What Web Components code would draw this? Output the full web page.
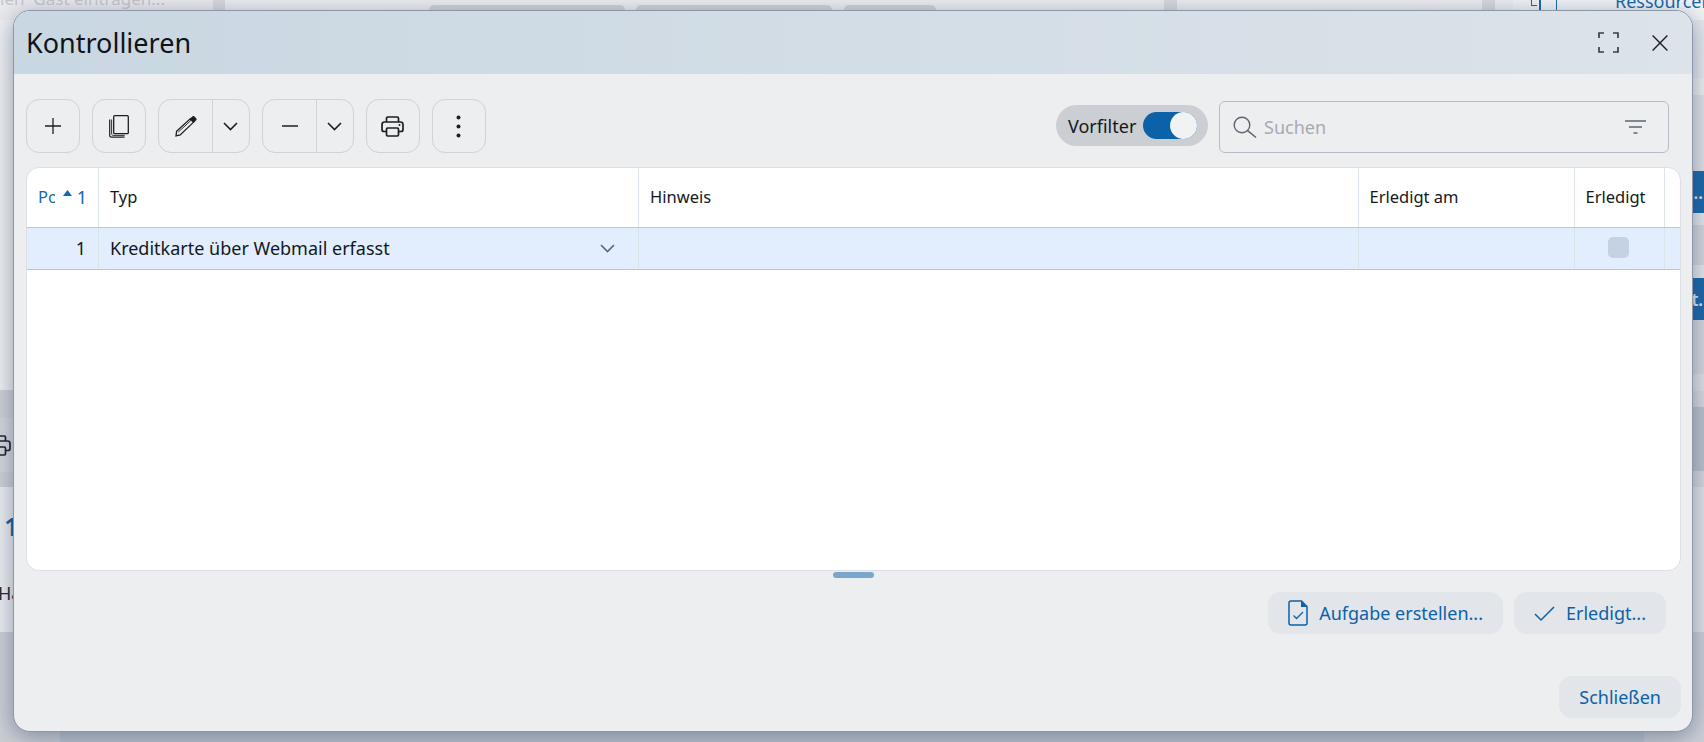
<!DOCTYPE html>
<html lang="de">
<head>
<meta charset="utf-8">
<title>Kontrollieren</title>
<style>
  html, body { margin: 0; height: 100%; overflow: hidden; background: #e9eaec; }
  body { font-family: "Noto Sans", "Liberation Sans", sans-serif; position: relative; }
</style>
</head>
<body>
<kc-backdrop></kc-backdrop>
<kc-dialog heading="Kontrollieren">
  <kc-toolbar slot="toolbar">
    <kc-tool-button icon="plus"></kc-tool-button>
    <kc-tool-button icon="copy"></kc-tool-button>
    <kc-split-button icon="pencil"></kc-split-button>
    <kc-split-button icon="minus"></kc-split-button>
    <kc-tool-button icon="printer"></kc-tool-button>
    <kc-tool-button icon="dots"></kc-tool-button>
    <kc-toggle slot="end" checked>Vorfilter</kc-toggle>
    <kc-search slot="end" placeholder="Suchen"></kc-search>
  </kc-toolbar>
  <kc-grid slot="content"></kc-grid>
  <kc-action-button slot="actions" icon="task">Aufgabe erstellen...</kc-action-button>
  <kc-action-button slot="actions" icon="check">Erledigt...</kc-action-button>
  <kc-action-button slot="footer">Schließen</kc-action-button>
</kc-dialog>

<script>
(function() {
  'use strict';

  // all icons share one helper, viewBox is given in real pixels per icon
  const ICONS = {
    plus: [16, 16, '<path d="M8 0v16M0 8h16" stroke-width="1.3"/>'],
    copy: [20, 23, '<rect x="4.7" y=".7" width="14.6" height="18" rx="1" stroke-width="1.3"/><path d="M.7 4.500v15.800c0 1 .9 1.900 1.900 1.900h13" stroke-width="1.200"/><path d="M2.600 4.500v14.200c0 1 .6 1.700 1.600 1.700h11.500" stroke-width=".9"/>'],
    pencil: [22, 21, '<path d="M1.600 15.200 15.200 2.800l3.400 3.300L5.200 19 1 20Z" stroke-width="1.300"/><path d="M14.400 3 17.400.4c.6-.5 1.500-.5 2 .1l1.800 1.800c.5.600.5 1.400 0 1.900L18.600 7Z" fill="#1b1f24" stroke="none"/><path d="M3.200 16.200 16.400 4" stroke-width=".9"/>'],
    minus: [16, 2, '<path d="M0 1h16" stroke-width="1.3"/>'],
    chevron: [15, 9, '<path d="M1 1l6.500 6.500L14 1" stroke-width="1.600"/>'],
    printer: [23, 21, '<path d="M5.500 6V2.200C5.500 1.500 6 1 6.700 1h9.600c.7 0 1.200.5 1.200 1.200V6" stroke-width="1.700"/><path d="M5 15.500H3C1.900 15.500 1 14.600 1 13.500V8.500C1 7.100 2.100 6 3.500 6h16C20.900 6 22 7.100 22 8.500v5c0 1.100-.9 2-2 2h-2" stroke-width="1.700"/><rect x="5.500" y="12" width="12" height="8" rx="1.200" stroke-width="1.700"/><circle cx="18.500" cy="9" r="1" fill="#1b1f24" stroke="none"/>'],
    dots: [5, 23, '<circle cx="2.500" cy="2.500" r="2" fill="#1b1f24" stroke="none"/><circle cx="2.500" cy="11.500" r="2" fill="#1b1f24" stroke="none"/><circle cx="2.500" cy="20.500" r="2" fill="#1b1f24" stroke="none"/>'],
    expand: [21, 21, '<path d="M1 6V1h5M15 1h5v5M20 15v5h-5M6 20H1v-5" stroke-width="1.700" stroke="#3a3f45"/>'],
    close: [16, 16, '<path d="M.6.600l14.800 14.800M15.400.6.600 15.400" stroke-width="1.400"/>'],
    search: [24, 22, '<circle cx="9" cy="9" r="7.800" stroke="#5b6672" stroke-width="1.400"/><path d="M14.600 14.600 23 21.500" stroke="#5b6672" stroke-width="1.500"/>'],
    filter: [21, 14, '<path d="M0 1h21M4 7h13" stroke="#5b6672" stroke-width="1.500"/><path d="M8.500 13h4" stroke="#5b6672" stroke-width="1.700"/>'],
    task: [20, 26, '<path d="M3 1h10.500L19 6.500V23c0 1.100-.9 2-2 2H3c-1.100 0-2-.9-2-2V3c0-1.100.9-2 2-2Z" stroke="#0b62a8" stroke-width="1.500"/><path d="M13 1v6h6Z" fill="#0b62a8" stroke="none"/><path d="M5.500 15.500l3 3 6.500-6.500" stroke="#0b62a8" stroke-width="1.300"/>'],
    check: [21, 15, '<path d="M1 8l6 6L20 1" stroke="#0b62a8" stroke-width="1.500"/>'],
    print: [23, 21, '<path d="M5.500 6V2.200C5.500 1.500 6 1 6.700 1h9.600c.7 0 1.200.5 1.200 1.200V6M5 15.500H3C1.900 15.500 1 14.600 1 13.500V8.500C1 7.100 2.100 6 3.500 6h16C20.900 6 22 7.100 22 8.500v5c0 1.100-.9 2-2 2h-2" stroke-width="1.700"/><rect x="5.500" y="12" width="12" height="8" rx="1.200" stroke-width="1.700"/>']
  };

  function iconSvg(name) {
    const ic = ICONS[name];
    if (!ic) return '';
    return `<svg width="${ic[0]}" height="${ic[1]}" viewBox="0 0 ${ic[0]} ${ic[1]}" fill="none" stroke="#1b1f24" style="display:block;overflow:visible;flex:none">${ic[2]}</svg>`;
  }

  // small base class, saves the same three lines in every element
  class KcElement extends HTMLElement {
    render(html) {
      if (!this.shadowRoot) this.attachShadow({ mode: 'open' });
      this.shadowRoot.innerHTML = html;
    }
  }

  class KcBackdrop extends KcElement {
    connectedCallback() {
      const band = (h, bg, inner) => `<div class="band" style="height:${h}px;background:${bg}">${inner || ''}</div>`;
      this.render(`
        <style>
          :host { display: flex; flex-direction: column; width: 1704px; height: 742px; overflow: hidden; color: #22272c; }
          .top { display: flex; height: 20px; flex: none; background: #eeeeef; }
          .top > div { flex: none; height: 100%; }
          .faded { width: 213px; background: #ebebed; color: #c6c7ca; font-size: 17px; line-height: 22px; white-space: pre; overflow: hidden; }
          .faded span { display: block; margin-top: -12px; }
          .sep { background: #d8d9dc; }
          .pill { height: 12px !important; margin-top: 5px; background: #d2d4d6; border-radius: 5px 5px 0 0; }
          .res { flex: 1 !important; display: flex; background: #f2f4f6; color: #1567ab; font-size: 18px; line-height: 24px; overflow: hidden; }
          .res span { display: block; flex: none; margin: -11px 0 0 58px; }
          .res i { display: block; flex: none; width: 6px; height: 6px; margin-left: 18px; border-left: 1.500px solid #1567ab; border-bottom: 1.500px solid #1567ab; box-sizing: border-box; }
          .res b { display: block; flex: none; width: 1.500px; height: 12px; margin-left: 2px; background: #1567ab; }
          .res b + b { margin-left: 15px; }
          .rows { flex: 1; display: flex; justify-content: space-between; background: #bfc5cd; }
          .col { width: 60px; display: flex; flex-direction: column; }
          .band { flex: none; overflow: hidden; display: flex; align-items: center; white-space: nowrap; box-sizing: border-box; }
          .blue { justify-content: flex-end; color: #dfe9f3; font-size: 17px; font-weight: 600; }
          .one { color: #0d5fa3; font-size: 26px; line-height: 33px; font-weight: 600; padding: 23px 0 0 4px; }
          .ha { font-size: 18px; line-height: 24px; margin: 38px 0 0 -2px; }
          .stack { align-self: flex-start; }
          .ic { margin-left: -12px; }
        </style>
        <div class="top">
          <div class="faded"><span>ien  Gast eintragen...</span></div>
          <div class="sep" style="width:12px"></div>
          <div style="width:204px"></div>
          <div class="pill" style="width:196px"></div>
          <div style="width:11px"></div>
          <div class="pill" style="width:196px"></div>
          <div style="width:12px"></div>
          <div class="pill" style="width:92px"></div>
          <div style="width:228px"></div>
          <div class="sep" style="width:13px"></div>
          <div style="width:305px"></div>
          <div class="sep" style="width:13px"></div>
          <div style="width:18px"></div>
          <div class="res"><i></i><b></b><b></b><span>Ressourcen</span></div>
        </div>
        <div class="rows">
          <div class="col">
            ${band(370, '#eff0f2')}
            ${band(28, '#cfd2d6')}
            ${band(54, '#d5d8dc', '<div class="ic">' + iconSvg('print') + '</div>')}
            ${band(15, '#cfd2d6')}
            ${band(145, '#eceef0', '<div class="stack"><div class="one">1</div><div class="ha">Ha</div></div>')}
            ${band(110, '#cdd0d5')}
          </div>
          <div class="col">
            ${band(18, '#e7eaed')}
            ${band(40, '#e7eaed')}
            ${band(17, '#eef0f1')}
            ${band(76, '#e0e3e6')}
            ${band(42, '#1a66a8', '<span class="blue" style="display:flex;width:100%;padding-right:1px">...</span>')}
            ${band(12, '#e6e8ea')}
            ${band(40, '#d5d8dc')}
            ${band(13, '#e6e8ea')}
            ${band(42, '#1a66a8', '<span class="blue" style="display:flex;width:100%;padding-right:1px">t.</span>')}
            ${band(54, '#d5d8dc')}
            ${band(17, '#e0e2e5')}
            ${band(16, '#d8dade')}
            ${band(64, '#bcc2cb')}
            ${band(16, '#d6d8dc')}
            ${band(145, '#e2e4e7')}
            ${band(110, '#ccd0d6')}
          </div>
        </div>`);
    }
  }

  class KcDialog extends KcElement {
    connectedCallback() {
      this.render(`
        <style>
          :host {
            position: absolute; left: 13px; top: 10px; width: 1680px; height: 722px;
            display: flex; flex-direction: column; box-sizing: border-box;
            background: #edeef0; border: 1px solid #8c98a9; border-radius: 17px; overflow: hidden;
            color: #14181c; box-shadow: 0 5px 24px rgba(50, 70, 105, .5);
          }
          header {
            flex: none; height: 63px; display: flex; align-items: center; padding: 0 24px 0 12px;
            background: linear-gradient(90deg, #c9d7e2, #dce3e9);
          }
          h1 { margin: 0; flex: 1; font-size: 27px; font-weight: 400; line-height: 34px; color: #0f1418; }
          .hbtn { display: flex; align-items: center; gap: 33px; }
          main { flex: 1; min-height: 0; display: flex; flex-direction: column; padding: 25px 11px 13px 12px; }
          .content { flex: 1; min-height: 0; display: flex; margin-top: 14px; }
          .handle { flex: none; display: flex; justify-content: center; padding: 1px 0 14px; }
          .handle i { display: block; width: 41px; height: 6px; border-radius: 3px; background: #7ba6cc; }
          .actions { flex: none; display: flex; justify-content: flex-end; gap: 11px; padding-right: 15px; }
          .footer { flex: none; display: flex; justify-content: flex-end; margin-top: 42px; }
        </style>
        <header>
          <h1>${this.getAttribute('heading') || ''}</h1>
          <div class="hbtn">${iconSvg('expand')}${iconSvg('close')}</div>
        </header>
        <main>
          <slot name="toolbar"></slot>
          <div class="content"><slot name="content"></slot></div>
          <div class="handle"><i></i></div>
          <div class="actions"><slot name="actions"></slot></div>
          <div class="footer"><slot name="footer"></slot></div>
        </main>`);
    }
  }

  class KcToolbar extends KcElement {
    connectedCallback() {
      this.render(`
        <style>
          :host { display: flex; flex: none; align-items: center; height: 54px; padding-right: 12px; }
          .start { display: flex; gap: 12.500px; }
          .end { margin-left: auto; display: flex; align-items: center; gap: 11px; }
          ::slotted(kc-toggle) { margin-top: -1px; }
        </style>
        <div class="start"><slot></slot></div>
        <div class="end"><slot name="end"></slot></div>`);
    }
  }

  class KcToolButton extends KcElement {
    connectedCallback() {
      this.render(`
        <style>
          :host { display: flex; align-items: center; justify-content: center; box-sizing: border-box;
                  width: 53.500px; height: 54px; border: 1px solid #cfd2d8; border-radius: 13px; }
        </style>
        ${iconSvg(this.getAttribute('icon'))}`);
    }
  }

  class KcSplitButton extends KcElement {
    connectedCallback() {
      this.render(`
        <style>
          :host { display: flex; box-sizing: border-box; width: 91.500px; height: 54px; border: 1px solid #cfd2d8; border-radius: 13px; }
          div { display: flex; align-items: center; justify-content: center; }
          .main { width: 53px; border-right: 1px solid #cfd2d8; }
          .more { flex: 1; }
        </style>
        <div class="main">${iconSvg(this.getAttribute('icon'))}</div>
        <div class="more">${iconSvg('chevron')}</div>`);
    }
  }

  class KcToggle extends KcElement {
    connectedCallback() {
      this.render(`
        <style>
          :host { display: flex; align-items: center; box-sizing: border-box; width: 152px; height: 41px; padding: 0 11px 0 12px;
                  background: #cbcfd3; border-radius: 21px; font-size: 18px; color: #14181c; }
          .label { flex: 1; }
          .track { display: flex; justify-content: flex-end; width: 54px; height: 27px; border-radius: 14px; background: #0b62a8; flex: none; }
          .knob { width: 27px; height: 27px; border-radius: 50%; background: #f1f2f4; }
        </style>
        <span class="label"><slot></slot></span>
        <span class="track"><span class="knob"></span></span>`);
    }
  }

  class KcSearch extends KcElement {
    connectedCallback() {
      this.render(`
        <style>
          :host { display: flex; align-items: center; box-sizing: border-box; width: 450px; height: 52px; margin-top: 2px;
                  padding: 0 22px 0 13px; border: 1px solid #b5bcc9; border-radius: 6px; font-size: 18px; color: #a6abb2; }
          .text { flex: 1; margin-left: 7px; }
        </style>
        ${iconSvg('search')}
        <span class="text">${this.getAttribute('placeholder') || ''}</span>
        ${iconSvg('filter')}`);
    }
  }

  class KcGrid extends KcElement {
    connectedCallback() {
      this.render(`
        <style>
          :host { display: block; flex: 1; box-sizing: border-box; background: #fff; border: 1px solid #dcdfe4; border-radius: 13px; overflow: hidden; font-size: 16.500px; color: #14181c; }
          .row { display: grid; grid-template-columns: 72px 540px 719.500px 216px 90.500px 1fr; box-sizing: border-box; }
          .head { height: 60px; border-bottom: 1px solid #b9c7d6; }
          .head .cell { padding-bottom: 2px; }
          .sel { height: 42px; border-bottom: 1px solid #b9c7d6; background: #e2eefd; font-size: 18px; }
          .sel .cell { padding-bottom: 1px; }
          .cell { display: flex; align-items: center; padding: 0 11px; border-right: 1px solid #dde3ea; box-sizing: border-box; min-width: 0; white-space: nowrap; }
          .cell:last-child { border-right: 0; }
          .pos { color: #1567ab; }
          .pos .clip { width: 17px; overflow: hidden; }
          .pos svg { margin: -8px 0 0 8px; flex: none; }
          .pos .n { margin-left: auto; font-size: 18px; }
          .num { justify-content: flex-end; padding-right: 12px; }
          .sp { flex: 1; }
          .chev { margin-right: 12px; }
          .box { width: 21px; height: 21px; border-radius: 5px; background: #c5d2e3; margin: -2px 0 0 22px; }
        </style>
        <div class="row head">
          <div class="cell pos"><span class="clip">Pos.</span><svg width="9" height="6" viewBox="0 0 9 6"><path d="M4.500 0 9 6H0Z" fill="#1567ab"/></svg><span class="n">1</span></div>
          <div class="cell">Typ</div>
          <div class="cell">Hinweis</div>
          <div class="cell">Erledigt am</div>
          <div class="cell">Erledigt</div>
          <div class="cell"></div>
        </div>
        <div class="row sel">
          <div class="cell num">1</div>
          <div class="cell"><span>Kreditkarte über Webmail erfasst</span><span class="sp"></span><span class="chev">${iconSvg('chevron').replace('stroke="#1b1f24"', 'stroke="#5b6672"')}</span></div>
          <div class="cell"></div>
          <div class="cell"></div>
          <div class="cell"><span class="box"></span></div>
          <div class="cell"></div>
        </div>`);
    }
  }

  class KcActionButton extends KcElement {
    connectedCallback() {
      this.render(`
        <style>
          :host { display: inline-flex; align-items: center; gap: 11px; box-sizing: border-box; height: 42px; padding: 0 20px;
                  background: #e2e5e9; border-radius: 13px; font-size: 18px; color: #0b62a8; white-space: nowrap; }
        </style>
        ${iconSvg(this.getAttribute('icon'))}<slot></slot>`);
    }
  }

  customElements.define('kc-backdrop', KcBackdrop);
  customElements.define('kc-dialog', KcDialog);
  customElements.define('kc-toolbar', KcToolbar);
  customElements.define('kc-tool-button', KcToolButton);
  customElements.define('kc-split-button', KcSplitButton);
  customElements.define('kc-toggle', KcToggle);
  customElements.define('kc-search', KcSearch);
  customElements.define('kc-grid', KcGrid);
  customElements.define('kc-action-button', KcActionButton);
})();
</script>
</body>
</html>
